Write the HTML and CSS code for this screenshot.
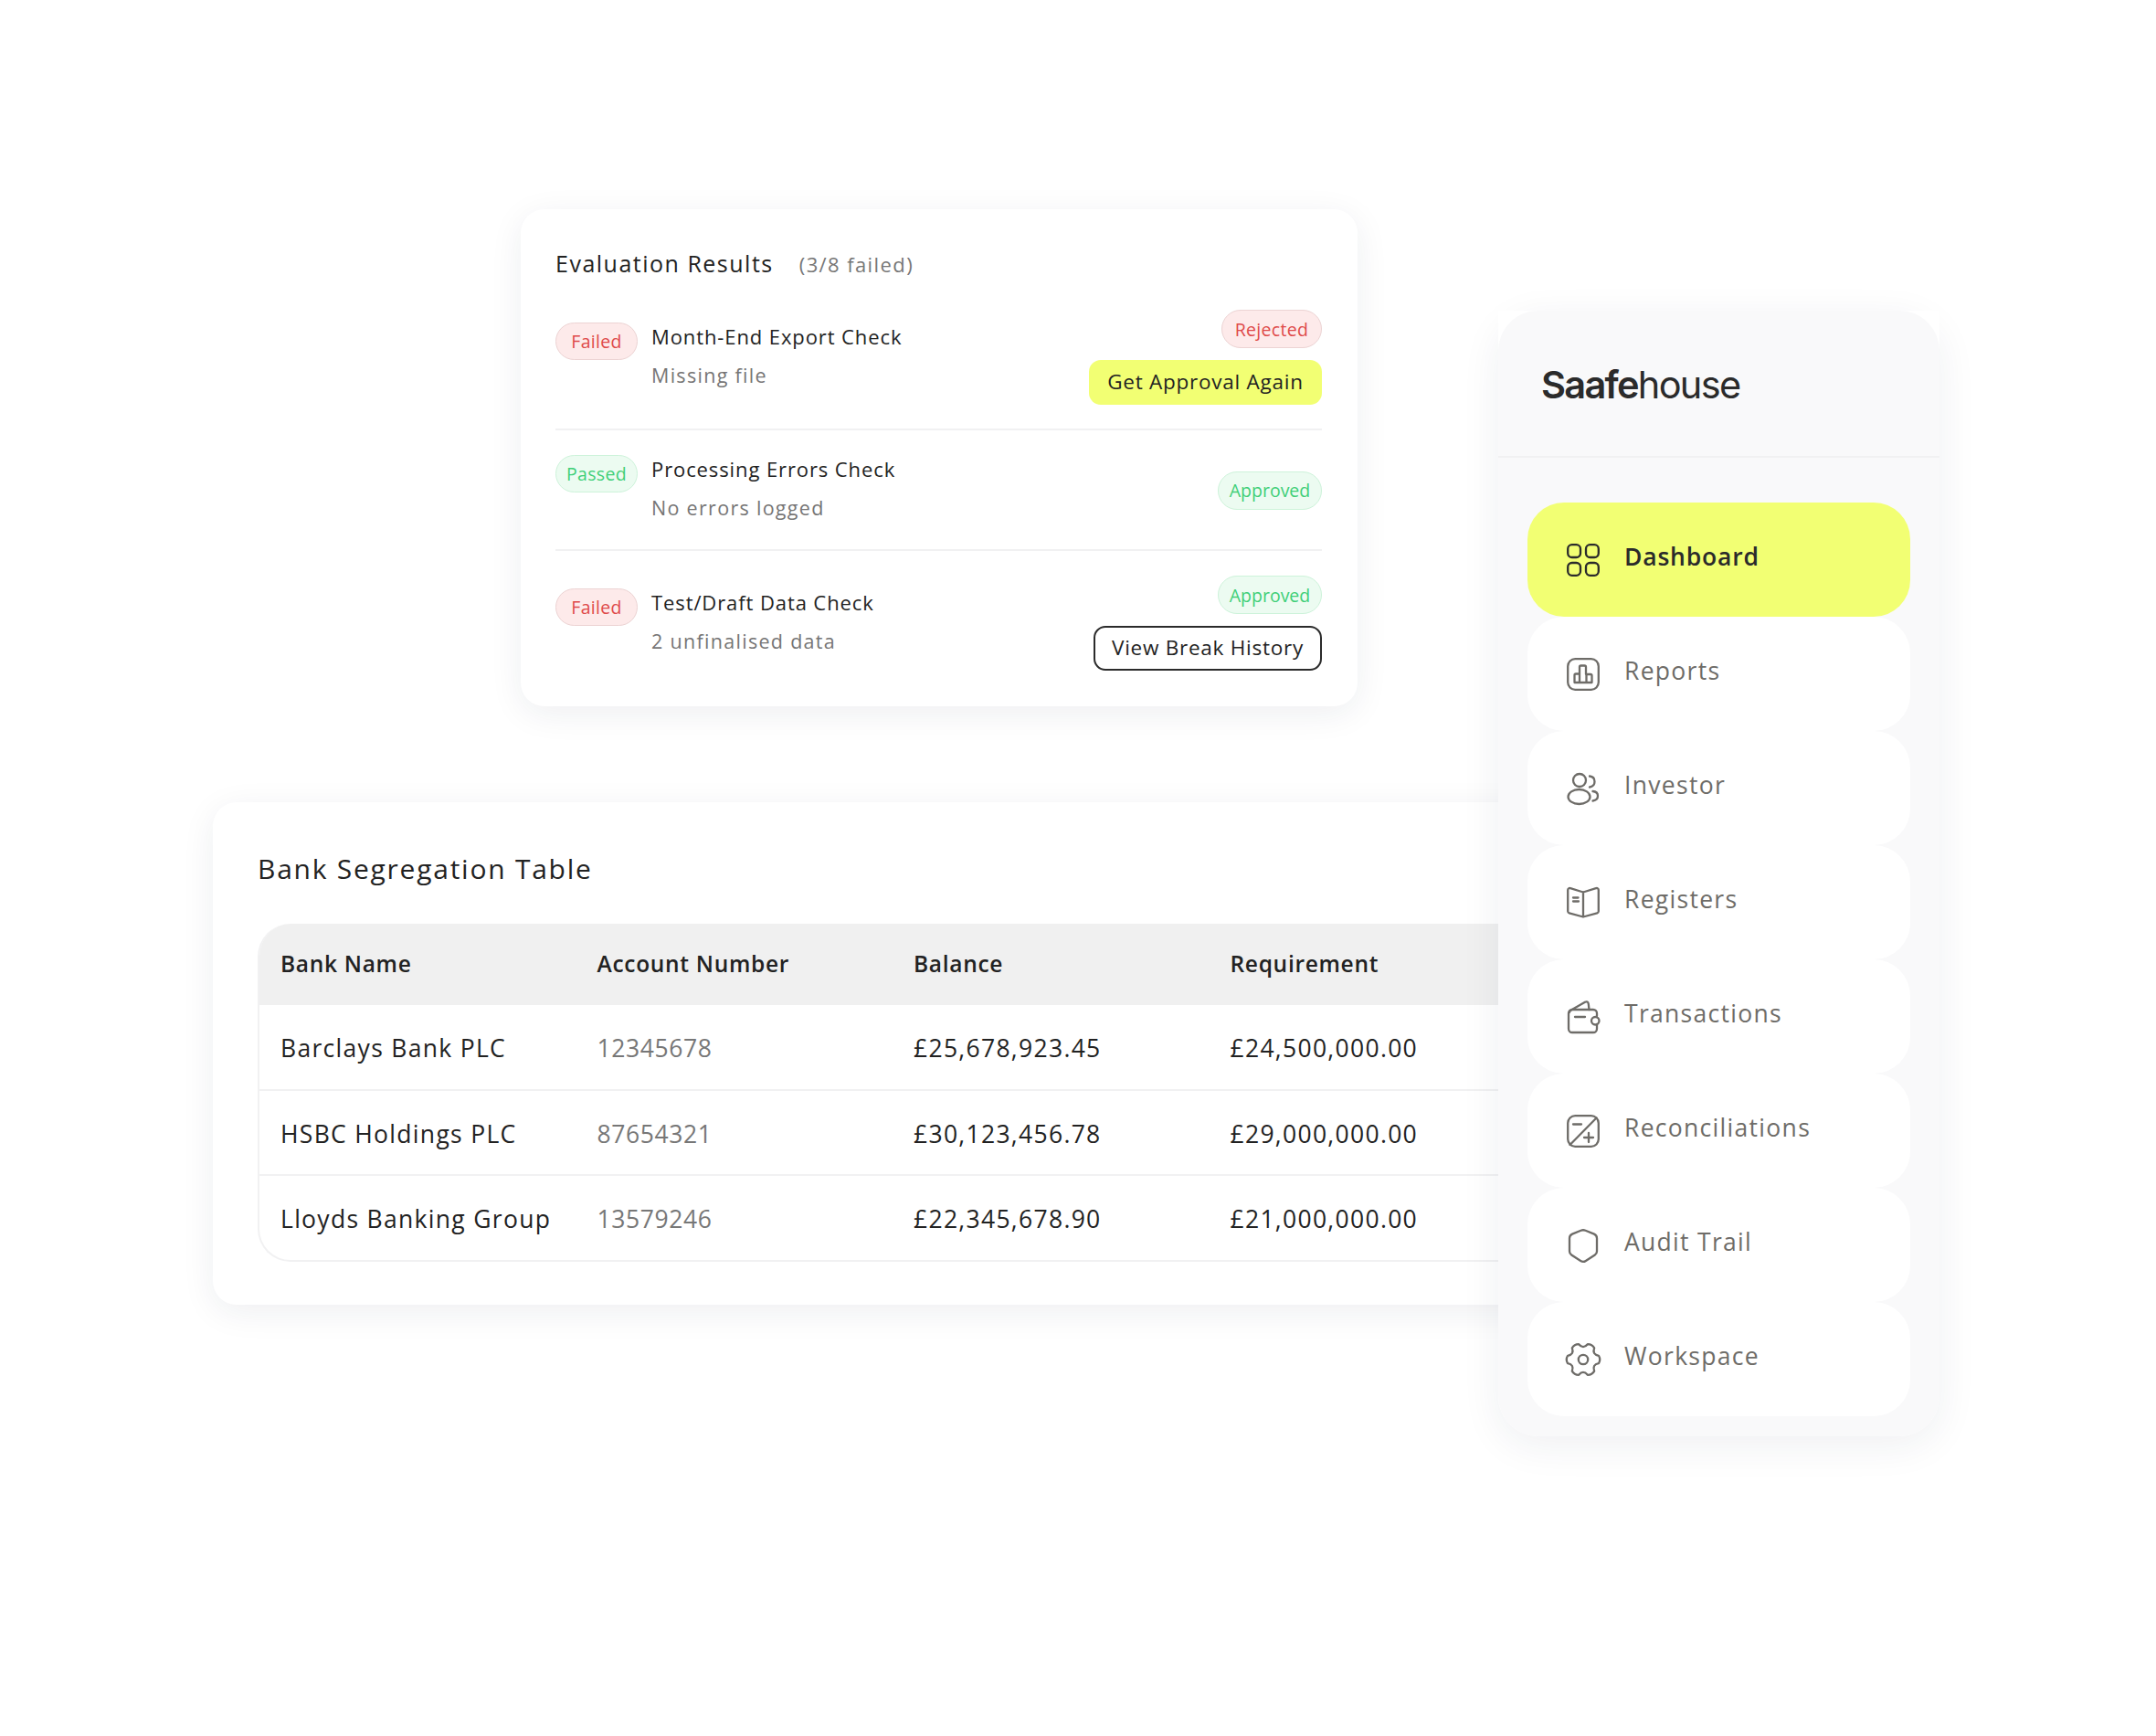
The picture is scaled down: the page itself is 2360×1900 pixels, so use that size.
FILE: index.html
```html
<!DOCTYPE html>
<html lang="en">
<head>
<meta charset="utf-8">
<title>Saafehouse</title>
<link rel="stylesheet" href="styles.css">
</head>
<body>
<main class="canvas">
  <section class="card eval">
    <h2 class="eval-title">Evaluation Results <span class="eval-count">(3/8 failed)</span></h2>
    <div class="row">
      <div class="row-left">
        <span class="pill red pill-l">Failed</span>
        <div><div class="name">Month-End Export Check</div><div class="sub">Missing file</div></div>
      </div>
      <div class="row-right">
        <span class="pill red pill-rej">Rejected</span>
        <button class="btn btn-yellow">Get Approval Again</button>
      </div>
    </div>
    <div class="row">
      <div class="row-left">
        <span class="pill green pill-l">Passed</span>
        <div><div class="name">Processing Errors Check</div><div class="sub">No errors logged</div></div>
      </div>
      <div class="row-right">
        <span class="pill green pill-app">Approved</span>
      </div>
    </div>
    <div class="row">
      <div class="row-left">
        <span class="pill red pill-l">Failed</span>
        <div><div class="name">Test/Draft Data Check</div><div class="sub">2 unfinalised data</div></div>
      </div>
      <div class="row-right">
        <span class="pill green pill-app">Approved</span>
        <button class="btn btn-outline">View Break History</button>
      </div>
    </div>
  </section>

  <section class="card bank">
    <h2 class="bank-title">Bank Segregation Table</h2>
    <div class="table">
      <div class="tr th"><div>Bank Name</div><div>Account Number</div><div>Balance</div><div>Requirement</div></div>
      <div class="tr"><div>Barclays Bank PLC</div><div class="acct">12345678</div><div>£25,678,923.45</div><div>£24,500,000.00</div></div>
      <div class="tr"><div>HSBC Holdings PLC</div><div class="acct">87654321</div><div>£30,123,456.78</div><div>£29,000,000.00</div></div>
      <div class="tr"><div>Lloyds Banking Group</div><div class="acct">13579246</div><div>£22,345,678.90</div><div>£21,000,000.00</div></div>
    </div>
  </section>

  <aside class="side">
    <div class="logo"><b>Saafe</b>house</div>
    <nav class="nav">
      <a class="item active"><svg class="ico" viewBox="0 0 36 36"><rect x="1.2" y="1.2" width="13.8" height="13.8" rx="4.5"/><rect x="21" y="1.2" width="13.8" height="13.8" rx="4.5"/><rect x="1.2" y="21" width="13.8" height="13.8" rx="4.5"/><rect x="21" y="21" width="13.8" height="13.8" rx="4.5"/></svg><span>Dashboard</span></a>
      <a class="item"><svg class="ico" viewBox="0 0 36 36"><rect x="1.2" y="1.2" width="33.6" height="33.6" rx="8"/><path d="M8.5 27V19a1.500 1.500 0 0 1 1.500-1.500h4V10a1.500 1.500 0 0 1 1.500-1.500h4a1.500 1.500 0 0 1 1.500 1.500v8H26a1.500 1.500 0 0 1 1.500 1.500V27zM14 17.500V27M21.500 18V27"/></svg><span>Reports</span></a>
      <a class="item"><svg class="ico" viewBox="0 0 36 36"><circle cx="14" cy="9" r="7"/><ellipse cx="13.500" cy="27" rx="12" ry="8"/><path d="M25 4.500c3.500.3 5.500 2.500 5.500 6s-2 5.500-5.500 6M28.500 21c3.500.3 5.500 2.200 5.500 5s-2 5-5.500 5.500"/></svg><span>Investor</span></a>
      <a class="item"><svg class="ico" viewBox="0 0 36 36"><path d="M18 6.500 4 2.200A2 2 0 0 0 1.200 4v23.500a2 2 0 0 0 1.500 1.800L18 33.500l15.300-4.200a2 2 0 0 0 1.500-1.800V4a2 2 0 0 0-2.800-1.800zM18 6.500v27M7 12.500h5.500M7 16.500h6"/></svg><span>Registers</span></a>
      <a class="item"><svg class="ico" viewBox="0 0 36 36"><path d="M33 17v-3a4 4 0 0 0-4-4H6a4 4 0 0 0-4 4v17a4 4 0 0 0 4 4h23a4 4 0 0 0 4-4v-5"/><path d="M3 13c0-1 .8-2 1.800-2.600L20 1.800c2-1 3.500-.2 3.800 2L24.500 10M9 18h11"/><rect x="27" y="18" width="8.500" height="8.500" rx="4.200"/></svg><span>Transactions</span></a>
      <a class="item"><svg class="ico" viewBox="0 0 36 36"><rect x="1.200" y="1.200" width="33.600" height="33.600" rx="8"/><path d="M3.500 33 32.500 3.500M7 10.500h9M19 25h10M24 20v10"/></svg><span>Reconciliations</span></a>
      <a class="item"><svg class="ico" viewBox="0 0 36 36"><path d="M15.500 1.800 6 5.600A5 5 0 0 0 3 10.200v14.200a5 5 0 0 0 2.200 4.100l10 6.500a5 5 0 0 0 5.600 0l10-6.500a5 5 0 0 0 2.200-4.100V10.200a5 5 0 0 0-3-4.600L20.500 1.800a6.500 6.500 0 0 0-5 0z"/></svg><span>Audit Trail</span></a>
      <a class="item"><svg class="ico" viewBox="0 0 36 36"><circle cx="18" cy="18" r="5.200"/><path d="M34.980 13.770Q37.500 18 34.980 22.230Q27.530 23.500 30.160 30.590Q27.750 34.890 22.820 34.820Q18 29 13.180 34.820Q8.250 34.890 5.840 30.590Q8.470 23.500 1.020 22.230Q-1.500 18 1.020 13.770Q8.470 12.500 5.840 5.410Q8.250 1.110 13.180 1.180Q18 7 22.820 1.180Q27.750 1.110 30.160 5.410Q27.530 12.500 34.980 13.770z"/></svg><span>Workspace</span></a>
    </nav>
  </aside>
</main>
</body>
</html>
```
FILE: styles.css
```css
* { box-sizing: border-box; }
html, body { margin: 0; background: #fff; }
body { font-family: "Open Sans", "Liberation Sans", sans-serif; color: #2b2b2b; }
.canvas { position: relative; width: 2360px; height: 1900px; overflow: hidden; }

.card { position: absolute; background: #fff; border-radius: 26px; box-shadow: 0 8px 36px rgba(30, 40, 70, .075); }

/* Evaluation card */
.eval { left: 570px; top: 229px; width: 916px; height: 544px; padding: 38px 39px 0 38px; }
.eval-title { margin: 0 0 3px; height: 42px; font-size: 25px; line-height: 42px; font-weight: 400; letter-spacing: 1.500px; color: #222; }
.eval-count { margin-left: 20px; font-size: 22px; line-height: 1; color: #777; letter-spacing: 1.400px; }
.row { display: flex; justify-content: space-between; align-items: center; padding: 27px 0 26px; border-bottom: 2px solid #f1f1f2; }
.row:last-child { border-bottom: 0; }
.row-left { display: flex; align-items: flex-start; gap: 15px; }
.row-right { display: flex; flex-direction: column; align-items: flex-end; gap: 13px; }
.name { font-size: 22px; line-height: 34px; letter-spacing: .9px; color: #222; margin-bottom: 9px; position: relative; top: -2px; }
.sub { font-size: 21.500px; line-height: 34px; letter-spacing: 1.300px; color: #767575; position: relative; top: -2px; }
.pill { display: flex; align-items: center; justify-content: center; height: 42px; border-radius: 21px; font-size: 19.500px; letter-spacing: .3px; border: 1.500px solid; }
.pill-l { width: 90px; height: 41px; flex: none; }
.pill-rej { width: 110px; }
.pill-app { width: 114px; letter-spacing: 0; }
.red { background: #fdeaea; border-color: #ecd3d3; color: #df4a4a; }
.green { background: #ecfbf1; border-color: #cdf3da; color: #3fcf78; }
.btn { display: flex; align-items: center; justify-content: center; font: inherit; font-size: 22.500px; letter-spacing: .75px; line-height: 30px; padding: 0 0 2px; color: #222; border-radius: 13px; height: 49px; }
.btn-yellow { width: 255px; background: #f2ff73; border: 0; }
.btn-outline { width: 250px; background: #fff; border: 2px solid #2b2b2b; }

/* Bank table */
.bank { left: 233px; top: 878px; width: 1500px; height: 550px; padding: 47px 0 0 49px; }
.bank-title { margin: 0 0 34px; font-size: 30px; line-height: 52px; font-weight: 400; letter-spacing: 1.750px; color: #222; }
.table { width: 1451px; border: 2px solid #f1f1f2; border-top: 0; border-right: 0; border-radius: 36px 0 0 36px; overflow: hidden; }
.tr { display: grid; grid-template-columns: repeat(4, 346.500px); align-items: center; height: 93.500px; padding: 3px 0 0 23px; font-size: 26.500px; letter-spacing: 1.300px; color: #222; border-bottom: 2px solid #f1f1f2; }
.tr:last-child { border-bottom: 0; height: 91.500px; }
.th { height: 89px; margin-left: -2px; padding: 0 0 3px 25px; background: #f0f0f0; border-bottom: 0; font-size: 24.500px; font-weight: 600; letter-spacing: .7px; }
.acct { color: #777; letter-spacing: .6px; }

/* Sidebar */
.side { position: absolute; left: 1640px; top: 340px; width: 483px; height: 1232px; border-radius: 44px; box-shadow: 0 10px 44px rgba(30, 40, 70, .07); isolation: isolate; }
.side::before { content: ""; position: absolute; z-index: -2; left: 0; right: 0; top: 0; height: 60px; background: #fff; }
.side::after { content: ""; position: absolute; z-index: -1; inset: 0; background: #f9f9fa; border-radius: 44px; }
.logo { height: 161px; padding: 56px 0 0 47px; border-bottom: 2px solid #f1f1f2; font-family: "Inter", "Liberation Sans", sans-serif; font-size: 41.500px; line-height: 50px; letter-spacing: -1.700px; color: #2b2b2b; }
.logo b { font-weight: 600; }
.nav { display: flex; flex-direction: column; padding: 49px 32px 0; }
.item { display: flex; align-items: center; height: 125px; padding: 0 0 0 43px; gap: 27px; background: #fff; border-radius: 40px; font-size: 26.500px; letter-spacing: 1.300px; color: #6e6c68; }
.item span { position: relative; top: -3.500px; }
.item.active { background: #f2ff73; color: #2b2b2b; font-weight: 600; letter-spacing: .8px; }
.ico { width: 36px; height: 36px; flex: none; fill: none; stroke: currentColor; stroke-width: 2.300; stroke-linejoin: round; stroke-linecap: round; overflow: visible; }
```
